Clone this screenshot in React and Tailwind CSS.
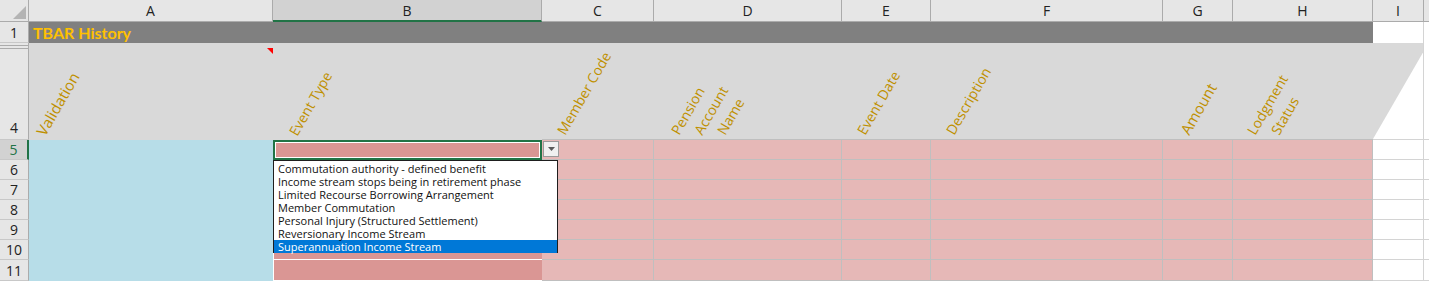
import React from "react"

const colLetters = ["A", "B", "C", "D", "E", "F", "G", "H", "I"]

const options = [
  "Commutation authority - defined benefit",
  "Income stream stops being in retirement phase",
  "Limited Recourse Borrowing Arrangement",
  "Member Commutation",
  "Personal Injury (Structured Settlement)",
  "Reversionary Income Stream",
  "Superannuation Income Stream",
]

// rotated header label, anchored at its bottom-left corner (zero width so wrapped lines sit side by side)
const Label = ({ children, className = "" }) => (
  <span className="block w-0 shrink-0">
    <span
      className={
        "block w-max origin-bottom-left -rotate-[60deg] whitespace-nowrap leading-none text-[14px] text-[#bf9000] " +
        className
      }
    >
      {children}
    </span>
  </span>
)

const RowHeader = ({ n, selected }) => (
  <div
    className={
      "flex items-center justify-center border-b border-[#c8c8c8] text-[14px] " +
      (selected
        ? "bg-[#d2d2d2] border-r-2 border-r-[#217346] text-[#217346]"
        : "bg-[#e6e6e6] border-r border-r-[#ababab] text-[#222]")
    }
  >
    {n}
  </div>
)

const PinkRow = () => (
  <>
    <div className="bg-[#e6b8b7] border-r border-b border-[#bfbfbf]" />
    <div className="bg-[#e6b8b7] border-r border-b border-[#bfbfbf]" />
    <div className="bg-[#e6b8b7] border-r border-b border-[#bfbfbf]" />
    <div className="bg-[#e6b8b7] border-r border-b border-[#bfbfbf]" />
    <div className="bg-[#e6b8b7] border-r border-b border-[#bfbfbf]" />
    <div className="bg-[#e6b8b7] border-r border-b border-[#bfbfbf]" />
    <div className="bg-white border-r border-b border-[#d4d4d4]" />
    <div className="bg-white border-b border-[#d4d4d4]" />
  </>
)

export default function App() {
  const rows = [6, 7, 8, 9, 10, 11]

  return (
    <div className="relative w-[1429px] h-[281px] overflow-hidden bg-white font-['Open_Sans',sans-serif]">
      <div className="grid grid-cols-[29px_244px_269px_112px_188px_89px_232px_70px_140px_51px_1fr] grid-rows-[22px_21px_97px_20px_20px_20px_20px_20px_20px_21px] h-full">
        {/* column header row */}
        <div className="relative bg-[#e6e6e6] border-r border-b border-[#ababab]">
          <svg className="absolute right-[2px] bottom-[2px]" width="13" height="13" viewBox="0 0 13 13">
            <polygon points="13,0 13,13 0,13" fill="#b4b4b4" />
          </svg>
        </div>
        {colLetters.map((c) => (
          <div
            key={c}
            className={
              "flex items-center justify-center text-[14px] text-[#222] border-r border-[#ababab] " +
              (c === "B"
                ? "bg-[#d2d2d2] border-b-2 border-b-[#217346]"
                : "bg-[#e6e6e6] border-b")
            }
          >
            {c}
          </div>
        ))}
        <div className="bg-[#e6e6e6] border-b border-[#ababab]" />

        {/* row 1 */}
        <RowHeader n="1" />
        <div className="col-span-8 flex items-center bg-[#808080] pl-[4px]">
          <span className="text-[16px] font-bold text-[#ffc000] leading-none font-['Lato',sans-serif]">TBAR History</span>
        </div>
        <div className="bg-white border-r border-[#d4d4d4]" />
        <div className="bg-white" />

        {/* row 4 (rows 2-3 hidden) */}
        <div className="flex flex-col justify-between bg-[#e6e6e6] border-r border-b border-[#ababab] border-b-[#c8c8c8]">
          <div className="flex flex-col gap-[2px] pt-[2px]">
            <div className="h-px bg-[#ababab]" />
            <div className="h-px bg-[#ababab]" />
          </div>
          <div className="text-center text-[14px] text-[#222] pb-[1px]">4</div>
        </div>
        <div className="relative flex items-end bg-[#d9d9d9] pl-[18px] pb-[2px]">
          <svg className="absolute right-0 top-[5px]" width="6" height="6" viewBox="0 0 6 6">
            <polygon points="0,0 6,0 6,6" fill="#ff0000" />
          </svg>
          <Label className="text-[15px]">Validation</Label>
        </div>
        <div className="flex items-end bg-[#d9d9d9] pl-[26px] pb-[2px]">
          <Label>Event Type</Label>
        </div>
        <div className="flex items-end bg-[#d9d9d9] pl-[25px] pb-[2px] border-b border-[#bfbfbf]">
          <Label>Member Code</Label>
        </div>
        <div className="flex items-end gap-[23px] bg-[#d9d9d9] pl-[27px] pb-[2px] border-b border-[#bfbfbf]">
          <Label>Pension</Label>
          <Label>Account</Label>
          <Label>Name</Label>
        </div>
        <div className="flex items-end bg-[#d9d9d9] pl-[25px] pb-[2px] border-b border-[#bfbfbf]">
          <Label>Event Date</Label>
        </div>
        <div className="flex items-end bg-[#d9d9d9] pl-[25px] pb-[2px] border-b border-[#bfbfbf]">
          <Label>Description</Label>
        </div>
        <div className="flex items-end bg-[#d9d9d9] pl-[28px] pb-[2px] border-b border-[#bfbfbf]">
          <Label className="text-[15px]">Amount</Label>
        </div>
        <div className="flex items-end gap-[24px] bg-[#d9d9d9] pl-[24px] pb-[2px] border-b border-[#bfbfbf]">
          <Label>Lodgment</Label>
          <Label>Status</Label>
        </div>
        <div className="bg-white border-r border-b border-[#d4d4d4]">
          <div className="h-full bg-[#d9d9d9] [clip-path:polygon(0_0,100%_0,100%_10%,0_100%)]" />
        </div>
        <div className="bg-white border-b border-[#d4d4d4]" />

        {/* row 5 */}
        <RowHeader n="5" selected />
        <div className="row-span-7 bg-[#b7dde8]" />
        <div className="bg-[#da9694] border-2 border-[#217346] shadow-[inset_0_0_0_1px_white]" />
        <PinkRow />

        {rows.map((n) => (
          <React.Fragment key={n}>
            <RowHeader n={String(n)} />
            <div className="bg-[#da9694] border-l border-b border-white" />
            <PinkRow />
          </React.Fragment>
        ))}
      </div>

      {/* data validation dropdown button */}
      <div className="absolute left-[543px] top-[141px] w-[16px] h-[16px] flex items-center justify-center bg-[#f0f0f0] border border-[#9a9a9a]">
        <svg width="7" height="4" viewBox="0 0 7 4">
          <polygon points="0,0 7,0 3.5,4" fill="#5a5a5a" />
        </svg>
      </div>

      {/* data validation list */}
      <div className="absolute left-[273px] top-[160px] w-[285px] h-[93px] bg-white border border-[#1e1e1e] py-px font-['Open_Sans',sans-serif] text-[11px] text-[#111]">
        {options.map((o, i) => (
          <div
            key={o}
            className={
              "h-[13px] leading-[13px] pl-[4px] whitespace-nowrap " +
              (i === options.length - 1 ? "bg-[#0078d7] text-white" : "")
            }
          >
            {o}
          </div>
        ))}
      </div>
    </div>
  )
}
